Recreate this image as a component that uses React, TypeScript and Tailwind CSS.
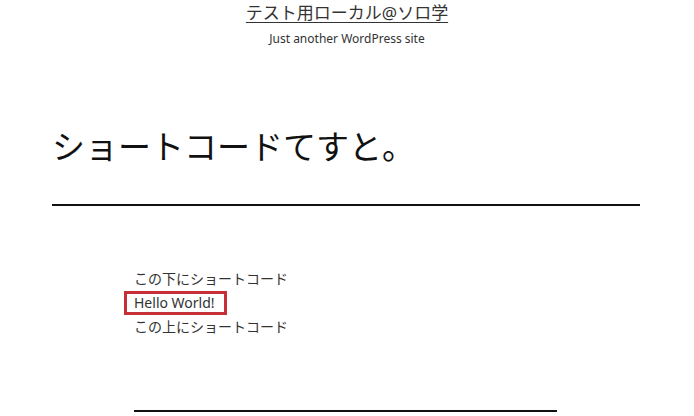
export default function App() {
    return (
        <div className="min-h-[416px] bg-white text-[#333] overflow-hidden" style={{ fontFamily: '"Noto Sans", "Noto Sans CJK JP", sans-serif' }}>
            {/* Site header */}
            <header className="flex flex-col items-center pt-[1px]">
                <a className="text-[17px] leading-[24px] underline underline-offset-[3px] text-[#333]">テスト用ローカル@ソロ学</a>
                <p className="text-[12px] leading-[16px] mt-[6px] text-[#333]">Just another WordPress site</p>
            </header>

            {/* Entry */}
            <div className="px-[52px] mt-[76px] w-[692px]">
                <h1 className="text-[33px] leading-[48px] text-[#111] font-normal">ショートコードてすと。</h1>
                <div className="mt-[33px] h-[2px] bg-[#111] w-[588px]"></div>
            </div>

            <div className="pl-[134px] mt-[61px] text-[14px] leading-[24px] text-[#333]">
                <p>この下にショートコード</p>
                <div className="-ml-[10px] w-[103px] h-[24px] border-[3px] border-[#c62f36] pl-[7px] leading-[18px]">Hello World!</div>
                <p>この上にショートコード</p>
                <div className="mt-[71px] h-[2px] bg-[#111] w-[423px]"></div>
            </div>
        </div>
    )
}
